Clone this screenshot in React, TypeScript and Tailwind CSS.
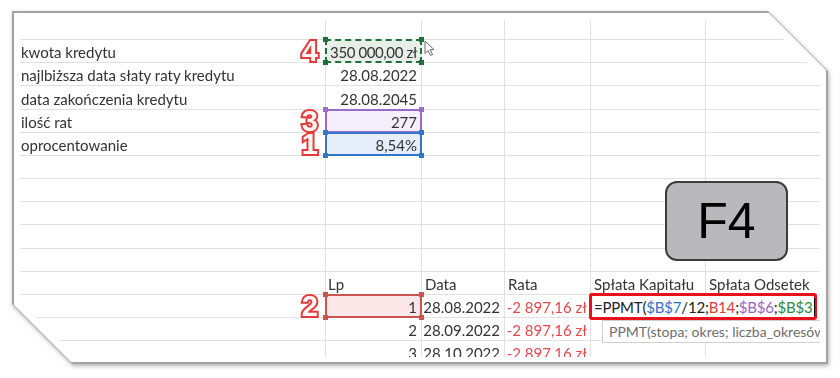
import * as React from "react";

type Tone = "green" | "purple" | "blue" | "red";

const toneMap: Record<Tone, { box: string; dot: string }> = {
  green: { box: "border-2 border-dashed border-[#1f6e3b] bg-[#e7eee7]", dot: "bg-[#1f6e3b]" },
  purple: { box: "border-2 border-[#9a6cc8] bg-[#f4effb]", dot: "bg-[#9a6cc8]" },
  blue: { box: "border-2 border-[#2f78cc] bg-[#e5eefa]", dot: "bg-[#2f78cc]" },
  red: { box: "border-2 border-[#cc5450] bg-[#fbe7e7]", dot: "bg-[#cc5450]" },
};

const Selection = ({ tone }: { tone: Tone }) => (
  <div className={`absolute -left-[1px] -top-[1px] -right-[1px] -bottom-[1px] z-10 ${toneMap[tone].box}`}>
    <span className={`absolute -left-[4px] -top-[4px] h-[5px] w-[5px] ${toneMap[tone].dot}`} />
    <span className={`absolute -right-[4px] -top-[4px] h-[5px] w-[5px] ${toneMap[tone].dot}`} />
    <span className={`absolute -left-[4px] -bottom-[4px] h-[5px] w-[5px] ${toneMap[tone].dot}`} />
    <span className={`absolute -right-[4px] -bottom-[4px] h-[5px] w-[5px] ${toneMap[tone].dot}`} />
  </div>
);

/** Red outlined step number next to a cell */
const Step = ({ n }: { n: string }) => (
  <span className="absolute right-[7px] top-1/2 z-20 -translate-y-1/2 font-['Liberation_Sans',sans-serif] text-[29px] font-bold leading-none text-[#fff6f6] [-webkit-text-stroke:4px_#e23b3b] [paint-order:stroke_fill]">
    {n}
  </span>
);

const Cursor = () => (
  <svg className="absolute -right-[14px] top-[0px] z-20" width="11" height="17" viewBox="0 0 11 17">
    <path d="M1 1 L1 13.5 L4 10.5 L6.5 15.5 L8.5 14.5 L6.2 9.6 L10 9.6 Z" fill="#fff" stroke="#6a6a6a" strokeWidth="1" strokeLinejoin="round" />
  </svg>
);

const cell = "relative flex items-end whitespace-nowrap border-b border-r border-[#e1e1e1] pb-[1px] leading-[18px]";
const lastCell = "relative flex items-end whitespace-nowrap border-b border-[#e1e1e1] pb-[1px] leading-[18px]";

const Row = ({ h, cells }: { h: string; cells: React.ReactNode[] }) => (
  <div className={`grid grid-cols-[306px_96px_83px_86px_115px_114px] ${h}`}>
    {cells.map((c, i) => (
      <div key={i} className={i === 5 ? lastCell : cell}>
        {c}
      </div>
    ))}
  </div>
);

const Label = ({ children }: { children: React.ReactNode }) => <span className="pl-[1px]">{children}</span>;
const Right = ({ children, className = "" }: { children: React.ReactNode; className?: string }) => (
  <span className={`ml-auto pr-[4px] ${className}`}>{children}</span>
);
const Left = ({ children }: { children: React.ReactNode }) => <span className="pl-[3px]">{children}</span>;
const Money = () => <span className="ml-auto pr-[3px] text-[#e5484a]">-2 897,16 zł</span>;

const Formula = () => (
  <>
    <div className="absolute -left-[2px] -top-[2px] z-30 flex h-[27px] w-[228px] items-center whitespace-nowrap rounded-[3px] border-[3px] border-[#e8121c] bg-white pl-[2px] text-[15px] tracking-[-0.2px] text-[#222]">
      <span>=PPMT(</span>
      <span className="text-[#2e75c8]">$B$7</span>
      <span>/12;</span>
      <span className="text-[#d83b3b]">B14</span>
      <span>;</span>
      <span className="text-[#9c62c6]">$B$6</span>
      <span>;</span>
      <span className="text-[#2f8a3d]">$B$3</span>
      <span className="ml-[1px] h-[18px] w-[1px] bg-black" />
    </div>
    <div className="absolute left-[11px] top-[25px] z-20 flex h-[23px] w-[240px] items-center whitespace-nowrap border border-[#cfcfcf] bg-white pl-[6px] text-[14px] text-[#6e6e6e]">
      PPMT(stopa; okres; liczba_okresów;
    </div>
  </>
);

const e = null;

export default function App() {
  return (
    <div className="h-[378px] w-[840px] overflow-hidden bg-white pl-[12px] pt-[11px] font-['Lato',sans-serif] text-[15px] text-[#333]">
      <div className="h-[353px] w-[816px] [filter:drop-shadow(1px_2px_2px_rgba(0,0,0,0.3))]">
        <div className="h-full w-full bg-[#a3a3a3] p-[2px] [clip-path:polygon(0_0,756px_0,816px_60px,816px_353px,60px_353px,0_293px)]">
          <div className="h-full w-full bg-white pl-[6px] pt-[7px] [clip-path:polygon(0_0,755px_0,812px_57px,812px_349px,57px_349px,0_292px)]">
            <div className="relative h-[337px] w-[800px] overflow-hidden [clip-path:polygon(0_0,744px_0,800px_56px,800px_337px,56px_337px,0_281px)]">
              <Row h="h-[20px]" cells={[e, e, e, e, e, e]} />
              <Row
                h="h-[23px]"
                cells={[
                  <>
                    <Label>kwota kredytu</Label>
                    <Step n="4" />
                  </>,
                  <>
                    <Selection tone="green" />
                    <Right className="relative z-20 tracking-[-0.4px]">350 000,00 zł</Right>
                    <Cursor />
                  </>,
                  e,
                  e,
                  e,
                  e,
                ]}
              />
              <Row h="h-[23px]" cells={[<Label>najlbiższa data słaty raty kredytu</Label>, <Right>28.08.2022</Right>, e, e, e, e]} />
              <Row h="h-[24px]" cells={[<Label>data zakończenia kredytu</Label>, <Right>28.08.2045</Right>, e, e, e, e]} />
              <Row
                h="h-[23px]"
                cells={[
                  <>
                    <Label>ilość rat</Label>
                    <Step n="3" />
                  </>,
                  <>
                    <Selection tone="purple" />
                    <Right className="relative z-20">277</Right>
                  </>,
                  e,
                  e,
                  e,
                  e,
                ]}
              />
              <Row
                h="h-[23px]"
                cells={[
                  <>
                    <Label>oprocentowanie</Label>
                    <Step n="1" />
                  </>,
                  <>
                    <Selection tone="blue" />
                    <Right className="relative z-20">8,54%</Right>
                  </>,
                  e,
                  e,
                  e,
                  e,
                ]}
              />
              <Row h="h-[23px]" cells={[e, e, e, e, e, e]} />
              <Row h="h-[23px]" cells={[e, e, e, e, e, e]} />
              <Row h="h-[23px]" cells={[e, e, e, e, e, e]} />
              <Row h="h-[24px]" cells={[e, e, e, e, e, e]} />
              <Row h="h-[23px]" cells={[e, e, e, e, e, e]} />
              <Row
                h="h-[23px]"
                cells={[e, <span className="pl-[2px]">Lp</span>, <Left>Data</Left>, <Left>Rata</Left>, <Left>Spłata Kapitału</Left>, <Left>Spłata Odsetek</Left>]}
              />
              <Row
                h="h-[23px]"
                cells={[
                  <Step n="2" />,
                  <>
                    <Selection tone="red" />
                    <Right className="relative z-20">1</Right>
                  </>,
                  <Right>28.08.2022</Right>,
                  <Money />,
                  <Formula />,
                  e,
                ]}
              />
              <Row h="h-[23px]" cells={[e, <Right>2</Right>, <Right>28.09.2022</Right>, <Money />, e, e]} />
              <Row h="h-[23px]" cells={[e, <Right>3</Right>, <Right>28.10.2022</Right>, <Money />, e, e]} />

              {/* F4 key */}
              <div className="absolute left-[645px] top-[161px] z-30 flex h-[80px] w-[123px] items-center justify-center rounded-[12px] border-2 border-[#3c3c3c] bg-[#b9b9bd] font-['Liberation_Sans',sans-serif] text-[50px] leading-none text-black">
                F4
              </div>
            </div>
          </div>
        </div>
      </div>
    </div>
  );
}
